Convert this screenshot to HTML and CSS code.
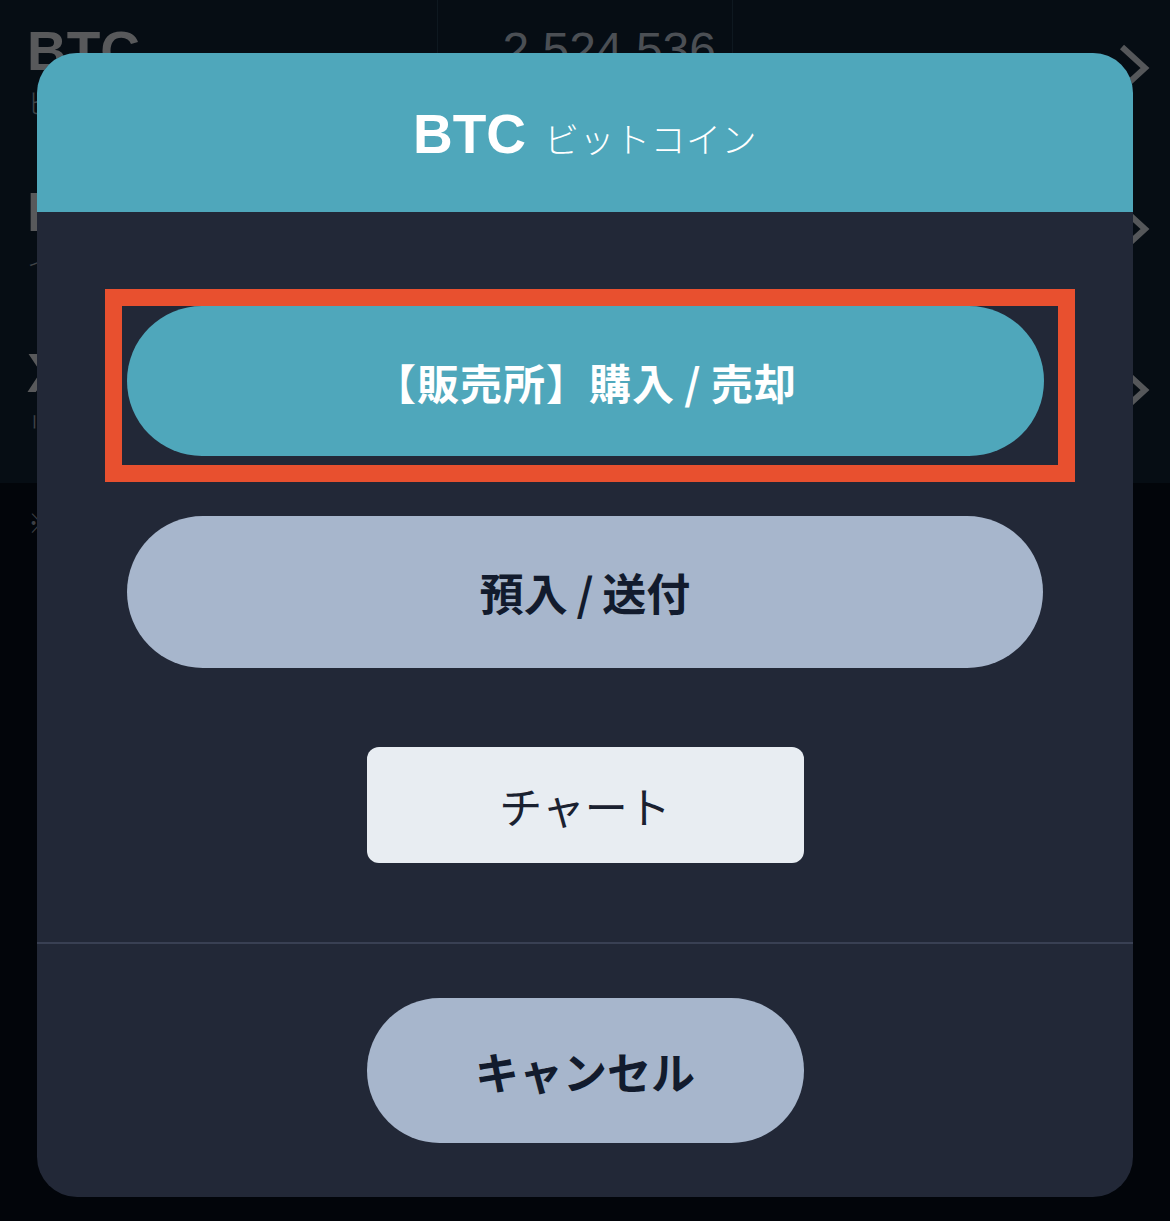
FILE: index.html
```html
<!DOCTYPE html>
<html lang="ja">
<head>
  <meta charset="UTF-8" />
  <meta name="viewport" content="width=device-width, initial-scale=1.0"/>
  <title>BTC | 取引メニュー</title>
  <link rel="stylesheet" href="styles.css">
</head>
<body>

  <div class="coin-list">
    <div class="coin-row">
      <div class="coin-name">
        <span class="symbol">BTC</span>
        <span class="jp-name">ビットコイン</span>
      </div>
      <div class="coin-price">2,524,536</div>
      <div class="coin-more">
        <svg class="chevron" viewBox="0 0 32 50"><path d="M4 4 L27 25 L4 46" /></svg>
      </div>
    </div>
    <div class="coin-row">
      <div class="coin-name">
        <span class="symbol">ETH</span>
        <span class="jp-name">イーサリアム</span>
      </div>
      <div class="coin-price"></div>
      <div class="coin-more">
        <svg class="chevron" viewBox="0 0 32 50"><path d="M4 4 L27 25 L4 46" /></svg>
      </div>
    </div>
    <div class="coin-row">
      <div class="coin-name">
        <span class="symbol">XRP</span>
        <span class="jp-name">リップル</span>
      </div>
      <div class="coin-price"></div>
      <div class="coin-more">
        <svg class="chevron" viewBox="0 0 32 50"><path d="M4 4 L27 25 L4 46" /></svg>
      </div>
    </div>
  </div>
  <p class="list-note">※</p>

  <div class="modal">
    <div class="modal-header">
      <span class="modal-symbol">BTC</span>
      <span class="modal-name">ビットコイン</span>
    </div>

    <div class="modal-body">
      <div class="highlight">
        <button class="btn btn-primary">【販売所】購入&thinsp;/&thinsp;売却</button>
      </div>
      <button class="btn btn-secondary">預入&thinsp;/&thinsp;送付</button>
      <button class="btn btn-chart">チャート</button>
    </div>

    <div class="modal-footer">
      <button class="btn btn-cancel">キャンセル</button>
    </div>
  </div>

</body>
</html>
```

FILE: styles.css
```css
* {
  box-sizing: border-box;
}

body {
  margin: 0;
  padding: 0;
  width: 1170px;
  height: 1221px;
  overflow: hidden;
  background: #02050a;
  font-family: "Liberation Sans", "Noto Sans CJK JP", sans-serif;
  position: relative;
}

/* list behind the dialog (already dimmed) */
.coin-list {
  background: #060d14;
  height: 483px;
}

.coin-row {
  display: flex;
  height: 161px;
}

.coin-name {
  width: 437px;
  padding: 20px 0 0 27px;
  display: flex;
  flex-direction: column;
}

.symbol {
  font-size: 55px;
  font-weight: 700;
  line-height: 62px;
  color: #58595b;
}

.jp-name {
  font-family: "Noto Sans CJK JP", sans-serif;
  font-size: 28px;
  font-weight: 300;
  line-height: 40px;
  color: #3f4347;
}

.coin-price {
  width: 296px;
  border-left: 1px solid #0e1820;
  border-right: 1px solid #0e1820;
  padding: 22px 16px 0 0;
  text-align: right;
  font-size: 48px;
  line-height: 56px;
  color: #4b4f54;
}

.coin-more {
  flex: 1;
  display: flex;
  justify-content: flex-end;
  padding: 43px 20px 0 0;
}

.chevron {
  width: 32px;
  height: 50px;
}

.chevron path {
  fill: none;
  stroke: #55575a;
  stroke-width: 6;
}

.list-note {
  margin: 0;
  padding: 20px 28px;
  font-family: "Noto Sans CJK JP", sans-serif;
  font-size: 26px;
  color: #3c3f44;
}

/* dialog */
.modal {
  position: absolute;
  top: 53px;
  left: 37px;
  width: 1096px;
  border-radius: 40px;
  overflow: hidden;
  background: #222837;
}

.modal-header {
  height: 159px;
  background: #4fa7bb;
  display: flex;
  justify-content: center;
  align-items: baseline;
  gap: 18px;
  padding-top: 49px;
  color: #fff;
}

.modal-symbol {
  font-size: 55px;
  font-weight: 700;
  line-height: 64px;
}

.modal-name {
  font-family: "Noto Sans CJK JP", sans-serif;
  font-size: 35px;
  font-weight: 300;
  letter-spacing: 0.5px;
}

.modal-body {
  padding: 77px 0 79px;
  display: flex;
  flex-direction: column;
  align-items: center;
  border-bottom: 2px solid #394053;
}

.highlight {
  align-self: stretch;
  margin: 0 58px 0 68px;
  border: 17px solid #e8502f;
  padding: 0 14px 9px 5px;
}

.btn {
  border: none;
  font-family: "Noto Sans CJK JP", sans-serif;
  cursor: pointer;
  display: flex;
  justify-content: center;
  align-items: center;
  padding: 0;
}

.btn-primary {
  width: 100%;
  height: 150px;
  border-radius: 75px;
  background: #4fa7bb;
  color: #fff;
  font-size: 42px;
  font-weight: 700;
  letter-spacing: 1px;
}

.btn-secondary {
  width: 916px;
  height: 152px;
  margin-top: 34px;
  border-radius: 76px;
  background: #a7b6cc;
  color: #121b2d;
  font-size: 44px;
  font-weight: 700;
}

.btn-chart {
  width: 437px;
  height: 116px;
  margin-top: 79px;
  border-radius: 12px;
  background: #e8edf2;
  color: #1a2130;
  font-size: 43px;
  font-weight: 400;
}

.modal-footer {
  padding: 54px 0;
  display: flex;
  justify-content: center;
}

.btn-cancel {
  width: 437px;
  height: 145px;
  border-radius: 73px;
  background: #a7b6cc;
  color: #121b2d;
  font-size: 44px;
  font-weight: 700;
}
```
